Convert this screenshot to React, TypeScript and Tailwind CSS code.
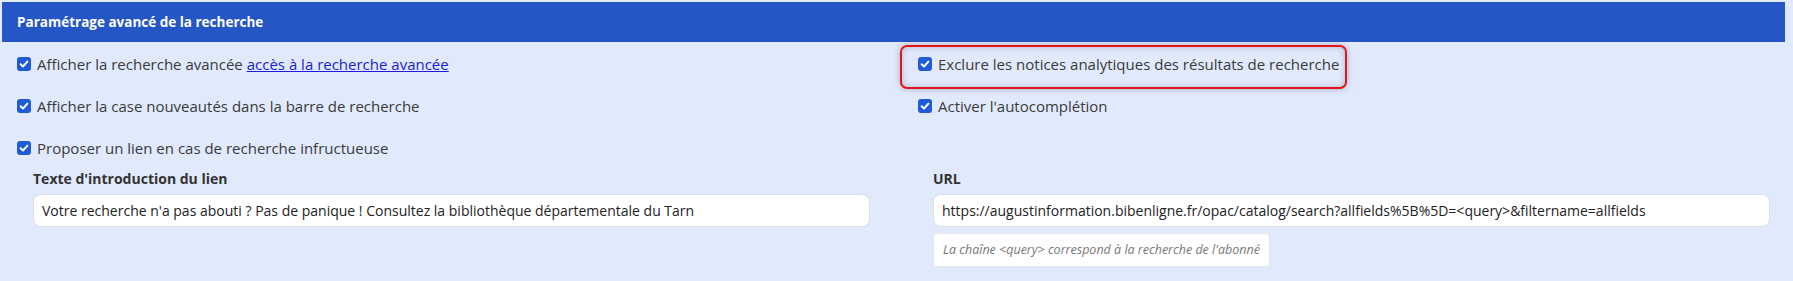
import React from 'react';

const font = "font-['Open_Sans','Noto_Sans',sans-serif]";

function Check() {
  return (
    <span className="flex-shrink-0 w-[14px] h-[14px] rounded-[3px] bg-[#1f5bd6] flex items-center justify-center">
      <svg width="10" height="10" viewBox="0 0 10 10" fill="none">
        <path d="M1.6 5.2 L4 7.5 L8.4 2.6" stroke="white" strokeWidth="1.9" strokeLinecap="round" strokeLinejoin="round" />
      </svg>
    </span>
  );
}

function Row({ children, highlight }: { children: React.ReactNode; highlight?: boolean }) {
  return (
    <div className="relative h-[42px] flex items-center gap-[6px]">
      {highlight && (
        <span className="absolute left-[-18px] top-[2px] w-[447px] h-[44px] border-2 border-[#e5141b] rounded-[7px] shadow-[0_0_6px_rgba(60,60,90,0.35),inset_0_0_6px_rgba(60,60,90,0.3)] pointer-events-none" />
      )}
      <Check />
      <span className="text-[15px] text-[#3a3a3a] leading-[20px] whitespace-nowrap">{children}</span>
    </div>
  );
}

export default function App() {
  return (
    <div className={`min-h-[281px] bg-[#e1eafd] pt-[2px] pl-[2px] pr-[8px] ${font}`}>
      <div className="h-[40px] bg-[#2457c5] flex items-center pl-[15px] text-white font-bold text-[13.5px]">
        Paramétrage avancé de la recherche
      </div>

      <div className="grid grid-cols-[901px_1fr] pl-[15px] pt-[1px]">
        <div>
          <Row>
            Afficher la recherche avancée{' '}
            <a href="#" className="text-[#1c1cd9] underline">accès à la recherche avancée</a>
          </Row>
          <Row>Afficher la case nouveautés dans la barre de recherche</Row>
          <Row>Proposer un lien en cas de recherche infructueuse</Row>
        </div>
        <div>
          <Row highlight>Exclure les notices analytiques des résultats de recherche</Row>
          <Row>Activer l'autocomplétion</Row>
        </div>
      </div>

      <div className="grid grid-cols-[837px_837px] gap-x-[63px] pl-[31px]">
        <div>
          <div className="text-[14px] font-bold text-[#333] leading-[20px]">Texte d'introduction du lien</div>
          <div className="mt-[5px] h-[33px] bg-white border border-[#dcdfe6] rounded-[8px] flex items-center px-[8px] text-[14px] text-[#222] whitespace-nowrap">
            Votre recherche n'a pas abouti ? Pas de panique ! Consultez la bibliothèque départementale du Tarn
          </div>
        </div>
        <div>
          <div className="text-[14px] font-bold text-[#333] leading-[20px]">URL</div>
          <div className="mt-[5px] h-[33px] bg-white border border-[#dcdfe6] rounded-[8px] flex items-center px-[8px] text-[14px] text-[#222] whitespace-nowrap">
            https://augustinformation.bibenligne.fr/opac/catalog/search?allfields%5B%5D=&lt;query&gt;&amp;filtername=allfields
          </div>
          <div className="mt-[6px] inline-flex h-[34px] items-center px-[9px] bg-white border border-[#e3e6ec] rounded-[4px] text-[12.5px] italic text-[#777]">
            La chaîne &lt;query&gt; correspond à la recherche de l'abonné
          </div>
        </div>
      </div>
    </div>
  );
}
